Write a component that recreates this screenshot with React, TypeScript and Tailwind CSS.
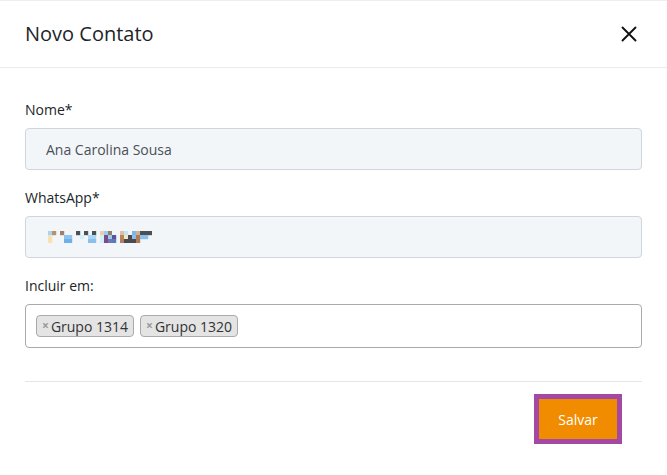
const PIXELS: (string | null)[][] = [
  ['#a9d4f0', '#b8906f', null, '#9a8070', null, null, null, '#4a5058', null, '#4a5058', null, '#4a5058', null, '#e6cfb0', '#9ccbee', '#9a7a68', '#eef7fc', null, '#dfbf9f', '#c0e4f8', null, '#7ab8e8', '#d2b08c', '#4a5058', '#4a5058', '#4a5058'],
  ['#f5e0b8', null, null, null, '#8ec5f0', '#8ec5f0', null, null, '#d0f0f8', null, '#a8d6f4', '#a8d6f4', null, '#d4eef6', '#7a4a8a', '#9cc8ea', '#6050a0', null, '#b8845c', '#f3e6c4', '#4a4a50', '#8cc0ec', '#b07a58', '#8cc0ec', '#8cc0ec', null],
  ['#f5e0b8', null, null, null, '#6fb0ea', '#6fb0ea', null, null, null, null, '#8cc0ec', '#8cc0ec', null, '#d4eef6', '#7a4a8a', '#6a7ab0', '#5a7ab8', null, '#b08060', '#4a4a50', '#4a4a50', '#4a4a50', '#b07a58', null, null, null],
];

function BlurredNumber() {
  const cell = 4;
  return (
    <svg width={PIXELS[0].length * cell} height={3 * cell + 0.6} className="block">
      {PIXELS.map((row, r) =>
        row.map((c, i) =>
          c ? <rect key={`${r}-${i}`} x={i * cell} y={r * cell} width={cell + 0.2} height={cell + 0.2} fill={c} /> : null
        )
      )}
    </svg>
  );
}

function Tag({ label }: { label: string }) {
  return (
    <span className="flex items-center h-[22px] px-[5px] bg-[#e4e4e4] border border-[#aaa] rounded-[4px] text-[14px] text-[#333]">
      <span className="text-[#999] text-[12px] mr-[2px] font-bold leading-none">×</span>
      {label}
    </span>
  );
}

export default function App() {
  return (
    <div className="min-h-screen bg-white border-t border-[#eeeeee] font-['Open_Sans',sans-serif] text-[#212529]">
      <header className="h-[67px] flex items-center justify-between pl-[25px] pr-[30px] border-b border-[#e9ecef]">
        <h1 className="text-[20px] leading-none text-[#212529]">Novo Contato</h1>
        <svg width="16" height="16" viewBox="0 0 16 16" className="block">
          <path d="M1.5 1.5 L14.5 14.5 M14.5 1.5 L1.5 14.5" stroke="#111" strokeWidth="1.9" strokeLinecap="round" />
        </svg>
      </header>

      <main className="px-[25px] pt-[31px]">
        <div className="mb-[17px]">
          <label className="block text-[14px] leading-[21px] mb-[8px]">Nome*</label>
          <div className="h-[42px] flex items-center pl-[20px] bg-[#f3f6f9] border border-[#d0d5db] rounded-[4px] text-[14px] text-[#495057]">
            Ana Carolina Sousa
          </div>
        </div>

        <div className="mb-[17px]">
          <label className="block text-[14px] leading-[21px] mb-[8px]">WhatsApp*</label>
          <div className="h-[42px] flex items-center pl-[22px] bg-[#f3f6f9] border border-[#d0d5db] rounded-[4px]">
            <BlurredNumber />
          </div>
        </div>

        <div>
          <label className="block text-[14px] leading-[21px] mb-[8px]">Incluir em:</label>
          <div className="h-[44px] flex items-center gap-[6px] pl-[10px] bg-white border border-[#aaa] rounded-[4px]">
            <Tag label="Grupo 1314" />
            <Tag label="Grupo 1320" />
          </div>
        </div>

        <div className="mt-[33px] border-t border-[#e5e5e5] pt-[12px] flex justify-end pr-[20px]">
          <button className="w-[88px] h-[50px] border-[5px] border-[#a349a4] bg-[#f18c00] text-white text-[14px]">
            Salvar
          </button>
        </div>
      </main>
    </div>
  );
}
